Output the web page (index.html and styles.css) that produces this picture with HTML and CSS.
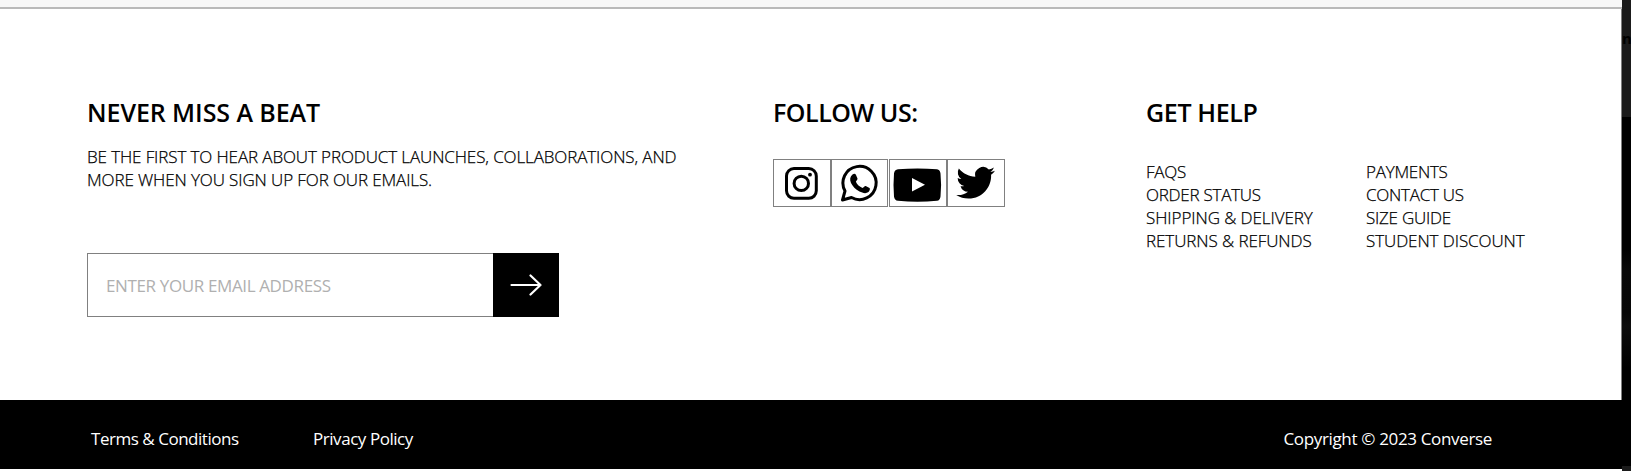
FILE: index.html
```html
<!DOCTYPE html>
<html lang="en">
<head>
<meta charset="utf-8">
<title>Converse</title>
<link rel="stylesheet" href="styles.css">
</head>
<body>
<div class="page">
  <div class="frame">
    <div class="topbar"></div>
    <footer class="main">
      <section class="signup">
        <h2 class="h-beat">NEVER MISS A BEAT</h2>
        <p class="copy">BE THE FIRST TO HEAR ABOUT PRODUCT LAUNCHES, COLLABORATIONS, AND<br>MORE WHEN YOU SIGN UP FOR OUR EMAILS.</p>
        <div class="field">
          <div class="input"><span class="hint">ENTER YOUR EMAIL ADDRESS</span></div>
          <div class="submit">
            <svg width="32" height="22" viewBox="0 0 32 22" fill="none" stroke="#fff" stroke-width="2.200" stroke-linecap="round" stroke-linejoin="round"><path d="M1.500 11H30.500M20.500 1.500L30.500 11L20.500 20.500"/></svg>
          </div>
        </div>
      </section>
      <section class="follow">
        <h2 class="h-follow">FOLLOW US:</h2>
        <div class="socials">
          <div class="social"><svg width="56" height="46" viewBox="0 0 56 46" fill="none" stroke="#000" stroke-width="3"><rect x="12.500" y="8.500" width="29.800" height="29.800" rx="7.500"/><circle cx="27.300" cy="23.400" r="7.200"/><circle cx="36" cy="14.700" r="1.900" fill="#000" stroke="none"/></svg></div>
          <div class="social second"><svg width="56" height="46" viewBox="0 0 56 46"><path d="M10.500 40L13 31A16.600 16.600 0 1 1 19.500 37.500Z" fill="none" stroke="#000" stroke-width="3" stroke-linejoin="round"/><path d="M20.500 14.500C22 13.500 23.500 13.700 24 15L25.500 18.500C25.900 19.600 24 21 23.900 21.800C25 24.500 27.500 26.700 30.500 28C31.600 27.600 32.600 25.600 33.700 26L37.500 28C38.500 28.600 37.600 31 36.500 32C34 34 30.500 33 27.500 31.600C23.500 29.600 20.500 26 19 23C17.500 19.800 18 16.600 20.500 14.500Z"/></svg></div>
          <div class="social third"><svg width="56" height="46" viewBox="0 0 56 46"><path d="M8 9.300Q27.500 7.800 47 9.300Q50 9.800 50.500 13.500Q51.700 25 50.500 36.500Q50 40.500 47 40.800Q27.500 42.500 8 40.800Q4.500 40.500 4 36.500Q3 25 4 13.500Q4.500 9.800 8 9.300Z"/><path d="M22 18V31.500L35 24.800Z" fill="#fff"/></svg></div>
          <div class="social"><svg width="56" height="46" viewBox="0 0 56 46"><path transform="translate(8.200 3.300) scale(1.620)" d="M23.950 4.570a10 10 0 0 1-2.820.770 4.960 4.960 0 0 0 2.160-2.720c-.95.550-2 .95-3.130 1.180a4.920 4.920 0 0 0-8.380 4.480C7.690 8.090 4.070 6.130 1.640 3.160a4.920 4.920 0 0 0 1.520 6.570 4.900 4.900 0 0 1-2.230-.61v.06a4.920 4.920 0 0 0 3.950 4.830 5 5 0 0 1-2.210.080 4.940 4.940 0 0 0 4.600 3.420A9.870 9.870 0 0 1 0 19.540a13.990 13.990 0 0 0 7.550 2.210c9.050 0 14-7.500 14-13.980 0-.21 0-.42-.02-.63a9.940 9.940 0 0 0 2.420-2.570z"/></svg></div>
        </div>
      </section>
      <section class="help">
        <h2 class="h-help">GET HELP</h2>
        <div class="links">
          <ul><li>FAQS</li><li>ORDER STATUS</li><li class="wide">SHIPPING &amp; DELIVERY</li><li class="wide">RETURNS &amp; REFUNDS</li></ul>
          <ul><li>PAYMENTS</li><li>CONTACT US</li><li>SIZE GUIDE</li><li class="wide">STUDENT DISCOUNT</li></ul>
        </div>
      </section>
    </footer>
    <div class="legal">
      <span class="terms">Terms &amp; Conditions</span>
      <span class="privacy">Privacy Policy</span>
      <span class="copyright">Copyright © 2023 Converse</span>
    </div>
  </div>
  <div class="backdrop"><div class="backdrop-top">n</div><div class="backdrop-mid"></div><div class="backdrop-end"></div></div>
</div>
</body>
</html>
```
FILE: styles.css
```css
* { box-sizing: border-box; }
body { margin: 0; background: #fff; color: #000; font-family: "Open Sans", "Noto Sans", sans-serif; overflow: hidden; }
.page { display: flex; width: 1631px; height: 471px; }
.frame { width: 1622px; display: flex; flex-direction: column; }
.topbar { height: 9px; background: #f7f7f7; border-bottom: 2px solid #b9b9b9; }
.main { height: 391px; display: flex; padding: 86px 0 0 87px; border-right: 1px solid #808080; }
h2 { margin: 0; font-size: 25px; line-height: 34px; font-weight: 600; white-space: nowrap; }
.h-beat { letter-spacing: -0.07px; }
.h-follow { letter-spacing: -0.45px; }
.h-help { letter-spacing: -0.35px; }
.signup { width: 686px; }
.follow { width: 373px; }
.copy { margin: 16px 0 0; font-size: 17px; line-height: 23px; font-weight: 300; white-space: nowrap; letter-spacing: -0.11px; -webkit-text-stroke: 0.25px #000; }
.field { display: flex; margin-top: 62px; width: 472px; height: 64px; }
.input { flex: 1; border: 1px solid #808080; border-right: 0; padding: 0 0 0 18px; display: flex; align-items: center; }
.hint { font-size: 17px; color: #b0b0b0; letter-spacing: -0.37px; white-space: nowrap; }
.submit { width: 66px; background: #000; display: flex; align-items: center; justify-content: center; padding-bottom: 1px; }
.socials { display: flex; margin-top: 30px; }
.social { width: 58px; height: 48px; border: 1px solid #808080; }
.social.second { width: 57px; }
.social.third { margin-left: 1px; }
.social svg { display: block; }
.links { display: flex; margin-top: 31px; }
.links ul { list-style: none; margin: 0; padding: 0; width: 220px; font-size: 17px; line-height: 23px; font-weight: 300; letter-spacing: -0.25px; white-space: nowrap; -webkit-text-stroke: 0.25px #000; }
.links .wide { letter-spacing: -0.08px; }
.legal { height: 69px; background: #000; color: #fff; display: flex; align-items: center; padding: 7px 130px 0 91px; font-size: 17px; white-space: nowrap; }
.terms { width: 222px; letter-spacing: -0.47px; }
.privacy { letter-spacing: -0.45px; }
.copyright { margin-left: auto; letter-spacing: -0.34px; }
.backdrop { width: 9px; overflow: hidden; display: flex; flex-direction: column; background: #000; }
.backdrop-top { height: 117px; background: #1b1b1b; font-size: 15px; font-weight: 700; line-height: 76px; }
.backdrop-mid { flex: 1; background: linear-gradient(#000 0 38%, #090909 44%, #070707 56%, #0d0d0d 60%, #000 72%); }
.backdrop-end { height: 5px; background: #1b1b1b; }
```
